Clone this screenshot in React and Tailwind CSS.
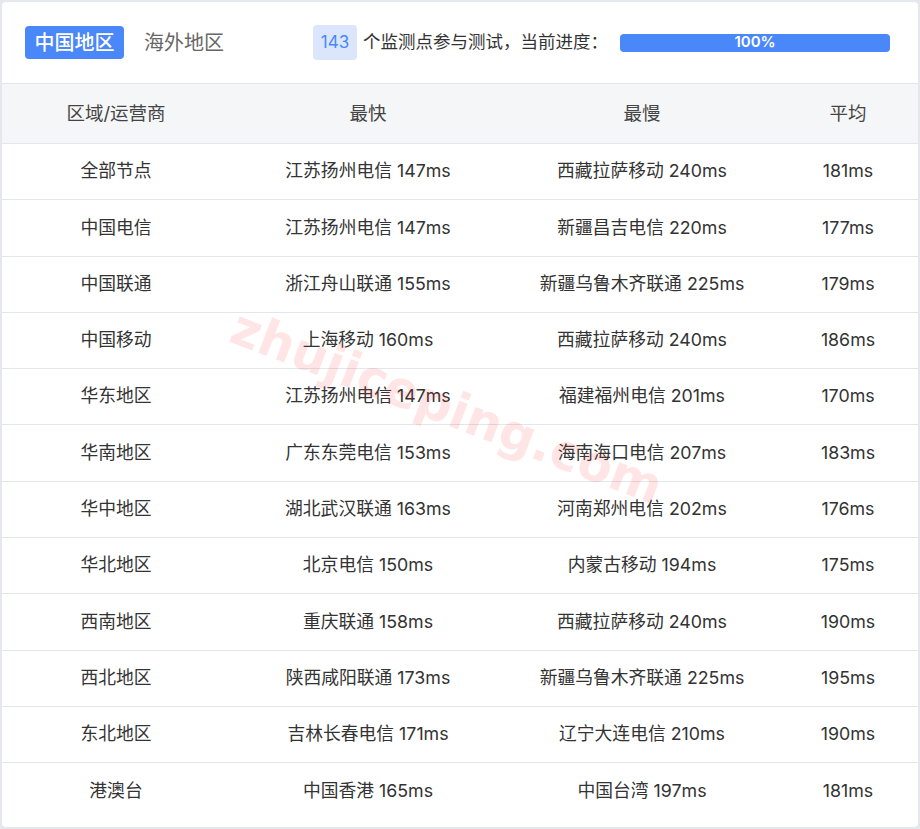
const rows = [
["全部节点","江苏扬州电信 147ms","西藏拉萨移动 240ms","181ms"],
["中国电信","江苏扬州电信 147ms","新疆昌吉电信 220ms","177ms"],
["中国联通","浙江舟山联通 155ms","新疆乌鲁木齐联通 225ms","179ms"],
["中国移动","上海移动 160ms","西藏拉萨移动 240ms","186ms"],
["华东地区","江苏扬州电信 147ms","福建福州电信 201ms","170ms"],
["华南地区","广东东莞电信 153ms","海南海口电信 207ms","183ms"],
["华中地区","湖北武汉联通 163ms","河南郑州电信 202ms","176ms"],
["华北地区","北京电信 150ms","内蒙古移动 194ms","175ms"],
["西南地区","重庆联通 158ms","西藏拉萨移动 240ms","190ms"],
["西北地区","陕西咸阳联通 173ms","新疆乌鲁木齐联通 225ms","195ms"],
["东北地区","吉林长春电信 171ms","辽宁大连电信 210ms","190ms"],
["港澳台","中国香港 165ms","中国台湾 197ms","181ms"],
];
const font = {fontFamily:'Inter, "Noto Sans CJK SC", sans-serif'};
export default function App(){
  return (
    <div className="w-[920px] h-[829px] bg-[#e4e7ec] p-[2px] relative overflow-hidden" style={font}>
      <div className="bg-white rounded-[4px] h-[825px] flex flex-col">
        <div className="h-[82px] flex items-center pl-[23px] border-b border-[#e3e6ea]">
          <div className="bg-[#4a87f8] text-white text-[20px] font-medium h-[33px] w-[99px] flex items-center justify-center rounded-[4px]">中国地区</div>
          <div className="text-[#666] text-[20px] ml-[20px]">海外地区</div>
          <div className="ml-[89px] bg-[#dbe6fd] text-[#4a87f8] text-[17px] h-[35px] w-[44px] flex items-center justify-center rounded-[4px]">143</div>
          <div className="text-[#333] text-[17.5px] ml-[6px]">个监测点参与测试，当前进度：</div>
          <div className="ml-[12px] w-[270px] h-[18px] bg-[#4a87f8] rounded-[4px] text-white text-[15px] font-semibold flex items-center justify-center">100%</div>
        </div>
        <div className="h-[60px] bg-[#f5f6f7] flex items-center text-[#444] text-[18.5px] border-b border-[#e3e6ea]">
          <div className="w-[228px] text-center">区域/运营商</div>
          <div className="w-[276px] text-center">最快</div>
          <div className="w-[272px] text-center">最慢</div>
          <div className="flex-1 text-center">平均</div>
        </div>
        {rows.map((r,i)=>(
          <div key={i} className={"h-[56.3px] flex items-center text-[#333] text-[17.8px] "+(i<rows.length-1?"border-b border-[#e3e6ea]":"")}>
            <div className="w-[228px] text-center">{r[0]}</div>
            <div className="w-[276px] text-center">{r[1]}</div>
            <div className="w-[272px] text-center">{r[2]}</div>
            <div className="flex-1 text-center">{r[3]}</div>
          </div>
        ))}
      </div>
      <div className="absolute left-[218px] top-[370px] text-[50px] font-bold text-[rgba(255,40,40,0.12)] rotate-[21deg] pointer-events-none whitespace-nowrap" style={{fontFamily:'"DejaVu Sans", sans-serif'}}>zhujiceping.com</div>
    </div>
  );
}
